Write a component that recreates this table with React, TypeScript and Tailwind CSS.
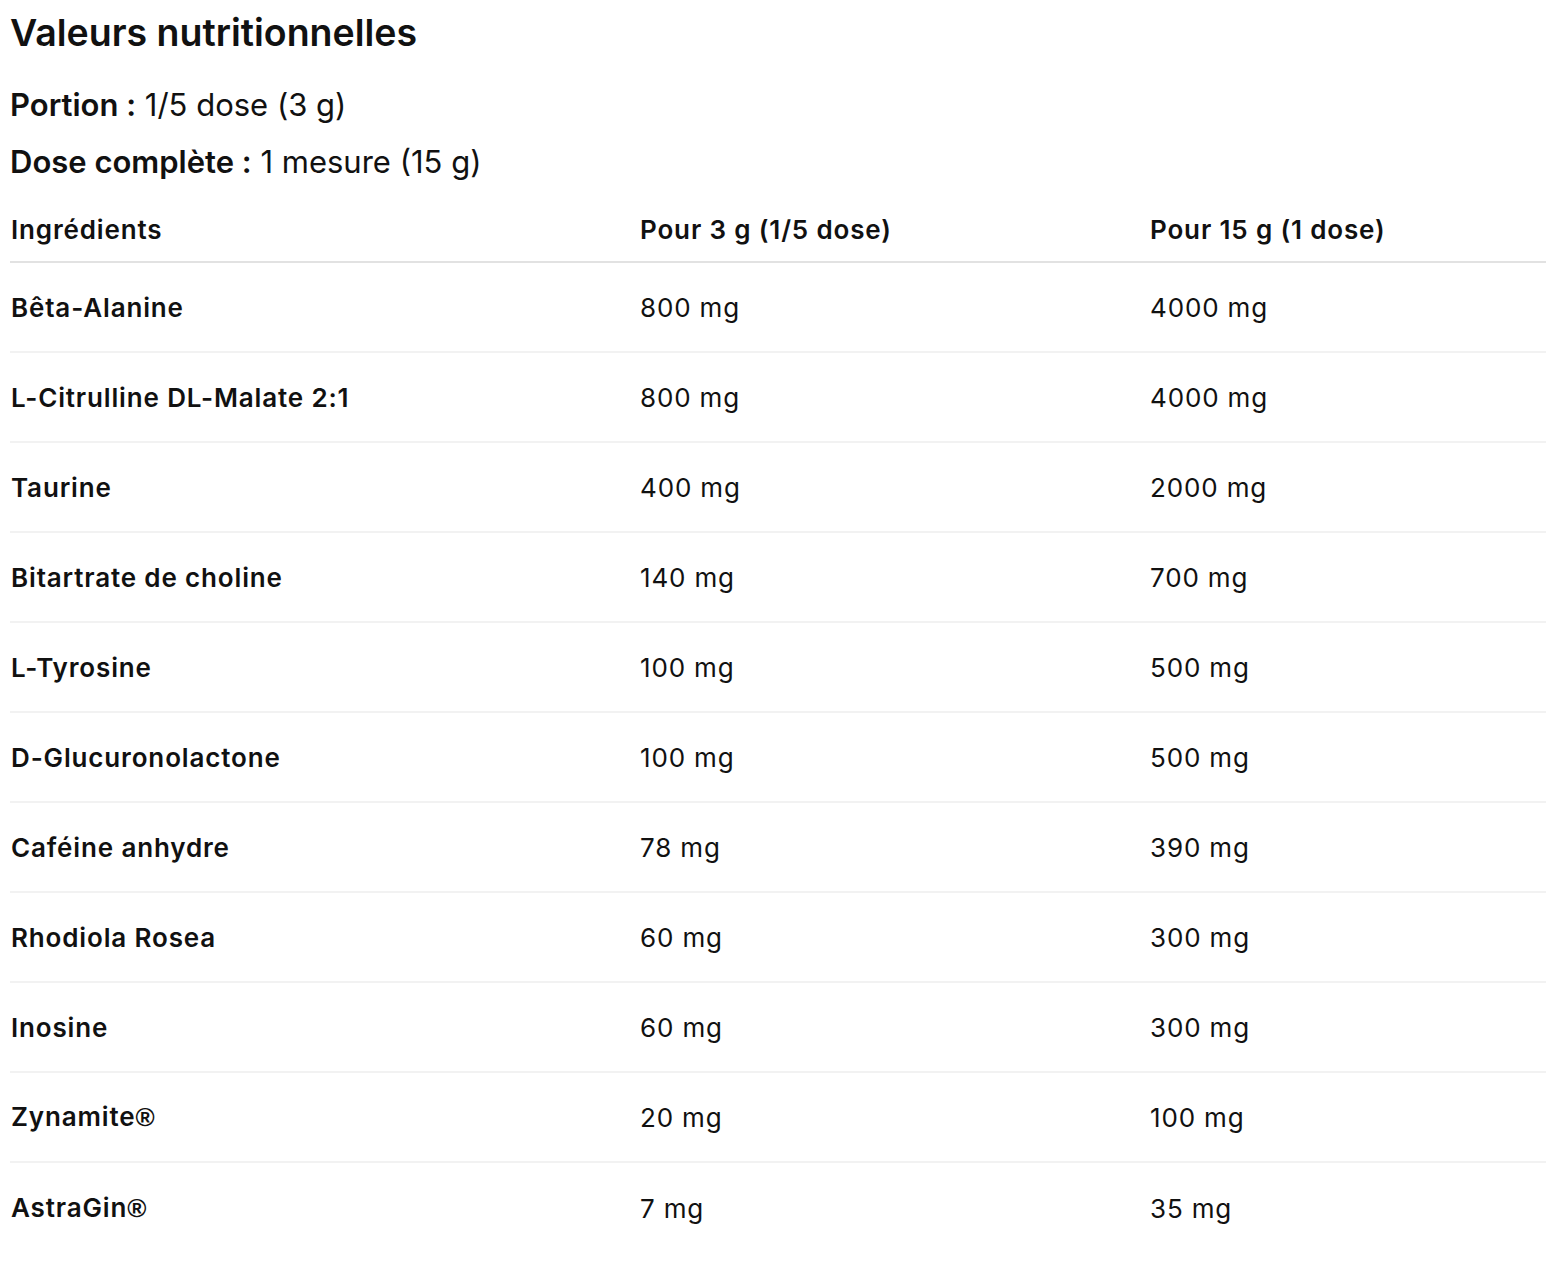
import React from "react";

const rows: [string, string, string][] = [
  ["Bêta-Alanine", "800 mg", "4000 mg"],
  ["L-Citrulline DL-Malate 2:1", "800 mg", "4000 mg"],
  ["Taurine", "400 mg", "2000 mg"],
  ["Bitartrate de choline", "140 mg", "700 mg"],
  ["L-Tyrosine", "100 mg", "500 mg"],
  ["D-Glucuronolactone", "100 mg", "500 mg"],
  ["Caféine anhydre", "78 mg", "390 mg"],
  ["Rhodiola Rosea", "60 mg", "300 mg"],
  ["Inosine", "60 mg", "300 mg"],
  ["Zynamite®", "20 mg", "100 mg"],
  ["AstraGin®", "7 mg", "35 mg"],
];

function Name({ text }: { text: string }) {
  if (text.endsWith("®")) {
    return (
      <>
        {text.slice(0, -1)}
        <span className="font-[Liberation_Sans] font-bold tracking-normal">®</span>
      </>
    );
  }
  return <>{text}</>;
}

export default function App() {
  return (
    <div
      className="min-h-[1272px] bg-white text-[#111111] pl-[10px] pt-[11px]"
      style={{ fontFamily: "Inter, 'Noto Sans', sans-serif" }}
    >
      <div className="w-[1536px]">
        <h1 className="text-[37.5px] leading-[44px] font-semibold">
          Valeurs nutritionnelles
        </h1>
        <p className="mt-[32px] text-[31px] leading-[36px]">
          <span className="font-semibold">Portion :</span> 1/5 dose (3 g)
        </p>
        <p className="mt-[21px] text-[31px] leading-[36px]">
          <span className="font-semibold">Dose complète :</span> 1 mesure (15 g)
        </p>
        <div className="mt-[17px]">
          <div className="grid grid-cols-[630px_510px_1fr] h-[66px] items-center border-b-2 border-[#e2e2e2] text-[26px] tracking-[0.85px] font-semibold">
            <div className="pl-[1px]">Ingrédients</div>
            <div>Pour 3 g (1/5 dose)</div>
            <div>Pour 15 g (1 dose)</div>
          </div>
          {rows.map((r, i) => (
            <div
              key={r[0]}
              className={
                i === rows.length - 1
                  ? "grid grid-cols-[630px_510px_1fr] h-[90px] items-center text-[26px] tracking-[0.85px]"
                  : "grid grid-cols-[630px_510px_1fr] h-[90px] items-center text-[26px] tracking-[0.85px] border-b-2 border-[#f2f2f2]"
              }
            >
              <div className="pl-[1px] font-semibold">
                <Name text={r[0]} />
              </div>
              <div>{r[1]}</div>
              <div>{r[2]}</div>
            </div>
          ))}
        </div>
      </div>
    </div>
  );
}
